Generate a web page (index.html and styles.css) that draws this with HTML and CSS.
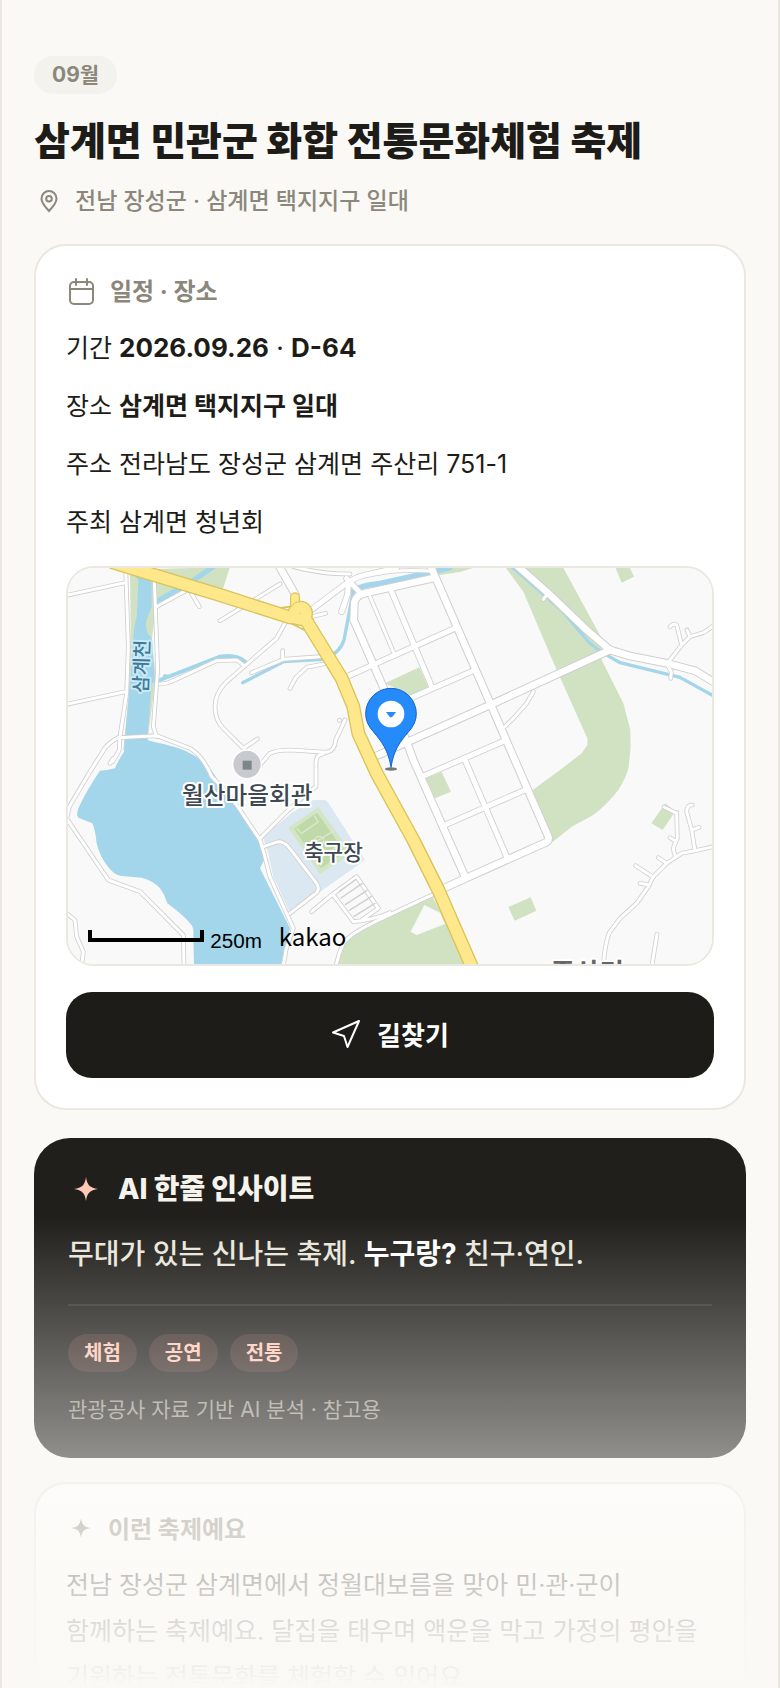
FILE: index.html
```html
<!DOCTYPE html>
<html lang="ko">
<head>
<meta charset="utf-8">
<meta name="viewport" content="width=device-width, initial-scale=1">
<title>삼계면 민관군 화합 전통문화체험 축제</title>
<link rel="stylesheet" href="styles.css">
</head>
<body>
<main class="app">
  <header class="intro">
    <span class="month">09월</span>
    <h1 class="title">삼계면 민관군 화합 전통문화체험 축제</h1>
    <p class="place">
      <svg class="place-icon" viewBox="0 0 24 24" aria-hidden="true"><path d="M12 22c-1-1.500-7.500-7-7.500-12.500a7.500 7.500 0 0 1 15 0C19.500 15 13 20.500 12 22z"/><circle cx="12" cy="9.800" r="2.800"/></svg>
      <span>전남 장성군 · 삼계면 택지지구 일대</span>
    </p>
  </header>

  <section class="card schedule">
    <h2 class="card-head">
      <svg class="head-icon line-icon" viewBox="0 0 30 30" aria-hidden="true"><rect x="4" y="5" width="23" height="22" rx="4"/><path d="M4 12h23M10 2v6M21 2v6"/></svg>
      <span>일정 · 장소</span>
    </h2>
    <div class="rows">
      <p>기간 <span class="date"><b>2026.09.26</b> · <b>D-64</b></span></p>
      <p>장소 <b>삼계면 택지지구 일대</b></p>
      <p>주소 전라남도 장성군 삼계면 주산리 751-1</p>
      <p>주최 삼계면 청년회</p>
    </div>
    <div class="map">
      <svg class="map-svg" viewBox="24 24 1932 1188" preserveAspectRatio="xMidYMid slice" role="img" aria-label="삼계면 지도">
        <defs>
          <g id="thin">
            <path d="M20 106L195 68M20 433L195 395M197 20L205 260L200 400L180 530L178 570L158 605"/>
            <path d="M283 60L293 330L280 500L290 530M175 533L290 527L390 565Q430 590 455 650L490 685L530 735L600 840L612 880L630 950L700 1105L678 1170L670 1216"/>
            <path d="M175 533Q140 550 125 580L90 635L28 740L20 776L145 960L240 995L370 1125L372 1216M20 1060L45 1080L50 1130L70 1175L65 1216M150 610L160 595"/>
            <path d="M290 140L390 85M388 90L418 140M480 182L660 72M300 372Q320 372 340 362L470 302L530 300L550 315M575 338L670 298L780 290L800 285M668 298V272M690 385L708 352L740 322L810 308"/>
            <path d="M675 190L650 235L500 365Q465 400 465 440Q465 480 490 505L555 570M555 562L592 537M600 615L630 580Q650 570 690 570L800 577Q825 572 827 540L855 480"/>
            <path d="M790 582Q768 582 768 610L768 680L730 710L680 755L600 835M610 860L655 845Q672 845 685 860L770 970Q780 985 770 998L690 1060"/>
            <path d="M755 170L797 160M700 20Q780 42 870 42M838 481h1M930 110L1002 280M960 40Q1010 28 1110 33"/>
            <path d="M755 1055L815 1005L890 950L955 1045L905 1080M820 1005L880 1085Q940 1080 990 1058"/>
            <path d="M1120 1003L960 1078Q870 1120 850 1150L838 1180L828 1216"/>
            <path d="M1420 395L1400 430L1365 470L1335 500M1450 118L1462 102M1830 300L1865 255L1855 215L1850 195Q1842 188 1830 200M1865 255L1890 230L1930 218L1960 198M1890 230L1881 210M1825 320L1834 335L1832 355"/>
            <path d="M1960 860L1905 872L1865 880L1820 910L1780 950L1765 980L1730 1030L1680 1075L1648 1118Q1635 1150 1630 1216M1905 872L1895 810L1880 755Q1880 735 1897 735M1895 810L1917 802M1845 885Q1838 870 1842 858L1852 835L1850 758M1850 760L1812 741M1845 842L1830 833M1820 910L1795 893M1780 952L1727 917M1768 975L1740 970M1791 1122L1776 1216"/>
          </g>
          <g id="mid">
            <path d="M865 78L862 105L845 155M860 55L902 100M995 95L1115 380M860 350L960 305L1185 205M1050 415L1245 330M1090 648L1335 542M1215 600L1340 890M1155 795L1395 690"/>
            <path d="M740 160L860 70Q890 48 930 42L1010 24"/>
          </g>
          <g id="wide">
            <path d="M655 14L706 104M1110 14L1360 590L1465 830Q1468 842 1458 847L1150 985"/>
            <path d="M1125 53L920 98Q885 105 883 130L881 180L1000 450L1040 545L1060 600L1215 950M940 592L1290 435L1650 270"/>
            <path d="M1368 14L1460 95L1580 210L1650 270L1710 288L1820 310L1905 332L1964 368"/>
          </g>
          <path id="highway" d="M160 8L480 105L690 172L735 175L765 225L845 355L880 440L895 520L950 640L1060 840L1135 990L1240 1230"/>
        </defs>

        <rect x="0" y="0" width="2000" height="1300" fill="#f9f9f9"/>
        <g fill="#d1e2c2">
          <path d="M210 30L510 20L488 90L375 80L290 130L275 240L288 350L262 545L190 570L205 420L212 200Z"/>
          <path d="M1335 20H1508L1625 235V300L1690 430L1711 510L1712 560L1706 620Q1700 650 1675 690Q1640 735 1600 765L1535 800L1473 850L1415 692L1500 630L1565 580L1582 555V535L1490 330L1390 95Z"/>
          <path d="M1665 20H1708L1722 50L1685 68ZM975 370L1078 322L1105 382L1050 407ZM1130 20H1250L1200 36L1120 48Z"/>
          <path d="M1098 655L1145 636L1173 695L1125 715ZM1345 1041L1412 1012L1429 1052L1364 1082ZM1816 730L1845 755L1808 810L1774 790Z"/>
          <path d="M832 1216L850 1160Q862 1130 900 1115L960 1085L1115 1005L1225 1216Z"/>
        </g>
        <path d="M1093 1035L1140 1058L1155 1092L1070 1125L1052 1115Z" fill="#f9f9f9"/>
        <path fill="#a3d6eb" d="M218 40L235 60L230 170Q220 200 216 300L195 530L192 575Q175 600 165 625Q140 632 120 632Q80 690 55 745Q48 765 55 773L97 790Q106 810 110 850Q120 890 140 915Q160 945 185 948L245 953Q280 962 300 985Q315 1005 322 1030Q370 1065 390 1090Q402 1100 400 1125L402 1216H663L672 1170L690 1105L600 925L615 895L605 850L590 830L530 735L470 655Q445 610 400 585Q360 560 280 545L262 540L275 370L302 362L312 342L330 345L285 362L275 235Q255 215 258 185L275 140V40Z"/>
        <g class="streams">
          <path d="M460 20L395 65L290 125" stroke-width="16"/>
          <path d="M300 360L480 290Q530 282 555 305" stroke-width="12"/>
          <path d="M548 368L670 305L790 298Q840 280 852 240L880 92" stroke-width="10"/>
          <path d="M880 92Q900 76 960 70L1170 24" stroke-width="16"/>
          <path d="M1355 20L1505 150L1585 245Q1610 270 1680 308L1860 352L1964 410" stroke-width="10"/>
        </g>
        <path d="M760 720H792Q800 720 805 728L915 900L690 1060L640 950L625 880L608 830L700 755Z" fill="#dce8f1"/>
        <path d="M775 742L685 803L780 943L875 880Z" fill="#d3e5c4"/>
        <path d="M771 758L702 806L783 925L855 877Z" fill="#bfd9a8"/>
        <g class="pitch"><path d="M711 806L724 821L774 786L764 768M740 862L822 812M783 915L772 900L828 862"/><circle cx="778" cy="842" r="13"/></g>

        <use href="#thin" class="thin-edge"/>
        <use href="#mid" class="mid-edge"/>
        <use href="#wide" class="wide-edge"/>
        <use href="#thin" class="thin-road"/>
        <use href="#mid" class="mid-road"/>
        <use href="#wide" class="wide-road"/>
        <path class="bays" d="M838 994L888 958M843 1014L907 970M856 1034L921 991M868 1051L934 1010M882 1069L945 1030"/>
        <path d="M650 145L690 140M690 188L740 214" class="ramp"/>
        <path d="M705 112V150" class="stub-edge"/>
        <use href="#highway" class="highway-edge"/>
        <circle cx="721" cy="160" r="38" fill="#d8c458"/>
        <use href="#highway" class="highway-road"/>
        <circle cx="721" cy="160" r="34" fill="#ffe88b"/>
        <path d="M705 112V150" class="stub-road"/>
        <path d="M692 142Q700 126 720 125" class="join"/>
        <circle cx="720" cy="160" r="2" fill="#d8c458"/>

        <circle cx="561" cy="613" r="43" fill="#c9cacf" stroke="#fff" stroke-width="4"/>
        <rect x="548" y="602" width="27" height="27" fill="#7c8888"/>
        <g class="map-label">
          <text x="562" y="733" font-size="71">월산마을회관</text>
          <text x="820" y="901" font-size="64">축구장</text>
          <text class="river-label" transform="translate(265 320) rotate(-88)" font-size="58">삼계천</text>
          <text class="town-label" x="1582" y="1267" font-size="80">주산리</text>
        </g>

        <ellipse cx="993" cy="627" rx="18" ry="5" fill="#777"/>
        <path d="M993 622C985 570 965 545 940 515Q917 490 917 461A76 76 0 0 1 1069 461Q1069 490 1046 515C1020 545 1001 570 993 622Z" fill="#258bfb" stroke="#1763cf" stroke-width="3"/>
        <circle cx="993" cy="462" r="40" fill="#fff"/>
        <path d="M978 456H1008L996 472H990Z" fill="#258bfb"/>

        <path d="M90 1110V1140H426V1110" fill="none" stroke="#000" stroke-width="12"/>
        <text class="scale-text" x="451" y="1164" font-size="62">250m</text>
        <text class="brand-text" x="656" y="1157" font-size="72">kakao</text>
      </svg>
    </div>
    <button class="route" type="button">
      <svg class="route-icon line-icon" viewBox="0 0 30 30" aria-hidden="true"><path d="M28 2L2 13.500L13 17L16.500 28Z"/></svg>
      <span>길찾기</span>
    </button>
  </section>

  <section class="insight">
    <h2 class="insight-head">
      <svg class="insight-star" viewBox="0 0 24 24" aria-hidden="true"><path d="M12 0C13 8 16 11 24 12C16 13 13 16 12 24C11 16 8 13 0 12C8 11 11 8 12 0Z"/></svg>
      <span>AI 한줄 인사이트</span>
    </h2>
    <p class="insight-text">무대가 있는 신나는 축제. <b>누구랑?</b> 친구·연인.</p>
    <ul class="tags">
      <li>체험</li>
      <li>공연</li>
      <li>전통</li>
    </ul>
    <p class="source">관광공사 자료 기반 AI 분석 · 참고용</p>
  </section>

  <section class="card about">
    <h2 class="card-head">
      <svg class="head-icon" viewBox="-5 -3 30 30" aria-hidden="true"><path fill="currentColor" d="M10 0C11 7 13 9 20 10C13 11 11 13 10 20C9 13 7 11 0 10C7 9 9 7 10 0Z"/></svg>
      <span>이런 축제예요</span>
    </h2>
    <p class="about-text">전남 장성군 삼계면에서 정월대보름을 맞아 민·관·군이 함께하는 축제예요. 달집을 태우며 액운을 막고 가정의 평안을 기원하는 전통문화를 체험할 수 있어요.</p>
  </section>
  <div class="fade"></div>
</main>
</body>
</html>
```
FILE: styles.css
```css
:root {
  --bg: #faf9f5;
  --ink: #1d1c18;
  --muted: #8c877b;
  --line: #eae8e1;
}

* {
  box-sizing: border-box;
  margin: 0;
  padding: 0;
}

body {
  background: var(--bg);
  color: var(--ink);
  font-family: Inter, "Noto Sans CJK KR", sans-serif;
  font-size: 25px;
}

.app {
  position: relative;
  height: 100vh;
  overflow: hidden;
  padding: 56px 32px 0;
  border: solid var(--line);
  border-width: 0 2px;
}

.intro {
  display: flex;
  flex-direction: column;
  align-items: flex-start;
  margin-bottom: 26px;
}

.month {
  padding: 0 18px;
  border-radius: 19px;
  background: #f3f2ed;
  color: var(--muted);
  font-size: 21px;
  font-weight: 700;
  line-height: 38px;
}

.title {
  margin: 22px 0 18px;
  font-size: 39px;
  font-weight: 800;
  line-height: 50px;
}

.place {
  display: flex;
  align-items: center;
  gap: 14px;
  color: var(--muted);
  font-size: 23px;
  font-weight: 500;
  line-height: 34px;
}

.place-icon {
  width: 24px;
  height: 24px;
  margin-left: 3px;
  fill: none;
  stroke: currentColor;
  stroke-width: 2;
}

.card {
  padding: 30px;
  border: 2px solid var(--line);
  border-radius: 32px;
  background: #fff;
}

.card-head {
  display: flex;
  align-items: center;
  gap: 14px;
  color: var(--muted);
  font-size: 24px;
  font-weight: 700;
  line-height: 32px;
}

.about .card-head {
  gap: 12px;
}

.head-icon {
  width: 30px;
  height: 30px;
}

.line-icon {
  fill: none;
  stroke: currentColor;
  stroke-width: 2;
  stroke-linecap: round;
  stroke-linejoin: round;
}

.rows {
  display: grid;
  gap: 18px;
  margin: 20px 0 24px;
  line-height: 40px;
}

.rows b,
.insight-text b {
  font-weight: 700;
}

.date {
  font-size: 26px;
}

.map {
  overflow: hidden;
  height: 400px;
  border: 2px solid var(--line);
  border-radius: 28px;
}

.map-svg {
  display: block;
  width: 100%;
  height: 100%;
}

.streams,
.pitch,
.thin-edge,
.thin-road,
.mid-edge,
.mid-road,
.wide-edge,
.wide-road,
.bays,
.ramp,
.join,
.stub-edge,
.stub-road,
.highway-edge,
.highway-road {
  fill: none;
  stroke-linecap: round;
  stroke-linejoin: round;
}

.streams { stroke: #a3d6eb; }
.pitch { stroke: #d9ead0; stroke-width: 4; }
.thin-edge { stroke: #cfcfcf; stroke-width: 14; }
.thin-road { stroke: #fff; stroke-width: 9; }
.mid-edge { stroke: #cfcfcf; stroke-width: 20; }
.mid-road { stroke: #fff; stroke-width: 15; }
.wide-edge { stroke: #cfcfcf; stroke-width: 26; }
.wide-road { stroke: #fff; stroke-width: 20; }
.bays { stroke: #cfcfcf; stroke-width: 4; }
.ramp { stroke: #d8c458; stroke-width: 5; }
.join { stroke: #d8c458; stroke-width: 3; }
.stub-edge { stroke: #d8c458; stroke-width: 30; }
.stub-road { stroke: #ffe88b; stroke-width: 23; }
.highway-edge { stroke: #d8c458; stroke-width: 42; }
.highway-road { stroke: #ffe88b; stroke-width: 34; }

.map-label {
  fill: #3d4852;
  stroke: #fff;
  stroke-width: 12;
  stroke-linejoin: round;
  paint-order: stroke;
  font-family: "Noto Sans CJK KR", sans-serif;
  font-weight: 500;
  text-anchor: middle;
}

.river-label {
  fill: #3a7b9c;
  stroke: #cbe8f4;
}

.town-label {
  fill: #666;
  font-weight: 700;
}

.scale-text {
  font-family: "Liberation Sans", sans-serif;
}

.brand-text {
  font-family: "Noto Sans CJK KR", sans-serif;
}

.route {
  display: flex;
  align-items: center;
  justify-content: center;
  gap: 16px;
  width: 100%;
  height: 86px;
  margin-top: 26px;
  padding-bottom: 3px;
  border: 0;
  border-radius: 26px;
  background: var(--ink);
  color: #fff;
  font: inherit;
  font-size: 26px;
  font-weight: 700;
}

.route-icon {
  width: 30px;
  height: 30px;
}

.insight {
  margin: 28px 0 24px;
  padding: 34px;
  border-radius: 36px;
  background: #201f1b;
  color: #e9e6dc;
}

.insight-head {
  display: flex;
  align-items: center;
  gap: 20px;
  color: #f5f3ec;
  font-size: 28px;
  font-weight: 800;
  line-height: 34px;
}

.insight-star {
  width: 24px;
  height: 24px;
  margin-left: 6px;
  fill: #ffc9b8;
}

.insight-text {
  margin-top: 26px;
  padding-bottom: 28px;
  border-bottom: 2px solid #33322d;
  font-size: 28px;
  font-weight: 500;
  line-height: 44px;
}

.insight-text b {
  color: #fff;
}

.tags {
  display: flex;
  gap: 12px;
  margin: 28px 0 24px;
  list-style: none;
}

.tags li {
  padding: 0 16px;
  border-radius: 19px;
  background: #3d2e29;
  color: #ffc9b8;
  font-size: 20px;
  font-weight: 700;
  line-height: 38px;
}

.source {
  color: #99958a;
  font-size: 21px;
  line-height: 28px;
}

.about-text {
  margin-top: 16px;
  line-height: 46px;
  word-break: keep-all;
}

.fade {
  position: absolute;
  right: 0;
  bottom: 0;
  left: 0;
  height: 472px;
  background: linear-gradient(rgba(250, 249, 245, 0), #faf9f5);
  pointer-events: none;
}
```
